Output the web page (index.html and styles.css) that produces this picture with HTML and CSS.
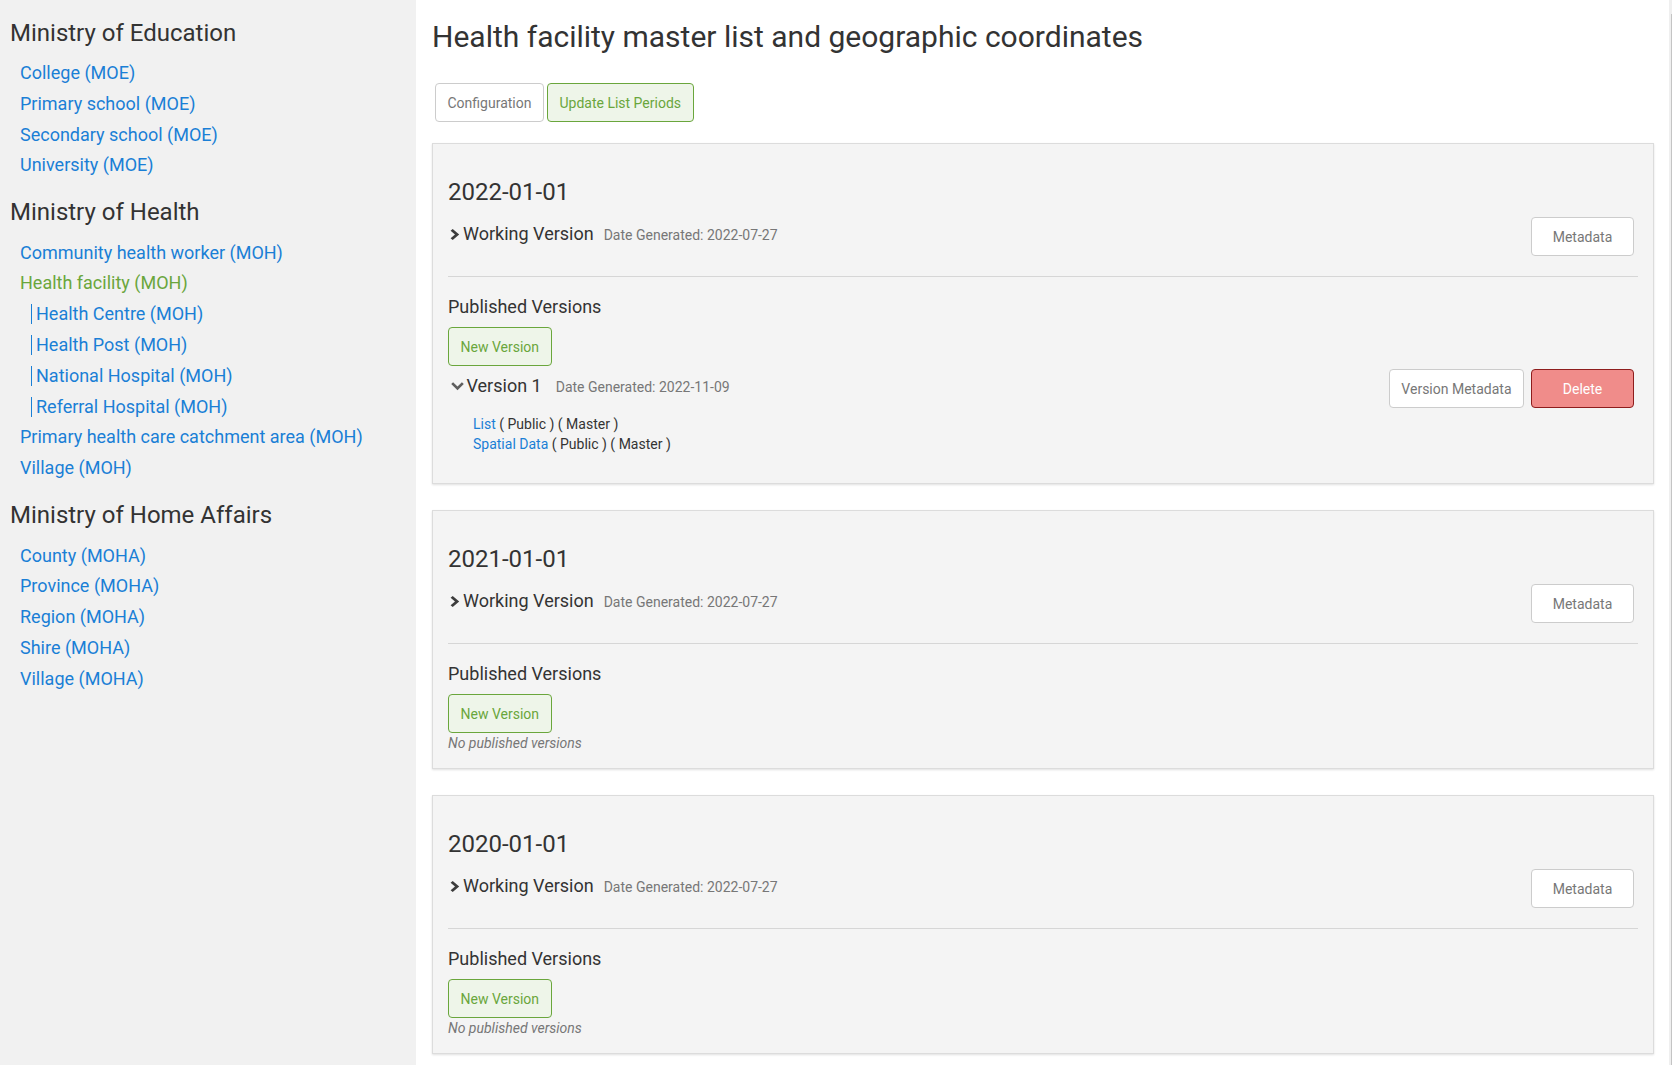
FILE: index.html
```html
<!DOCTYPE html>
<html lang="en">
<head>
<meta charset="utf-8">
<title>Health facility master list and geographic coordinates</title>
<link rel="stylesheet" href="styles.css">
</head>
<body>
<div class="layout">
  <aside class="sidebar">
    <section class="org">
      <h3 class="org-title">Ministry of Education</h3>
      <ul class="type-list">
        <li class="type-item"><a class="type-link" href="#">College (MOE)</a></li>
        <li class="type-item"><a class="type-link" href="#">Primary school (MOE)</a></li>
        <li class="type-item"><a class="type-link" href="#">Secondary school (MOE)</a></li>
        <li class="type-item"><a class="type-link" href="#">University (MOE)</a></li>
      </ul>
    </section>
    <section class="org">
      <h3 class="org-title">Ministry of Health</h3>
      <ul class="type-list">
        <li class="type-item"><a class="type-link" href="#">Community health worker (MOH)</a></li>
        <li class="type-item"><a class="type-link is-active" href="#">Health facility (MOH)</a></li>
        <li class="type-item sub-item"><a class="type-link sub-link" href="#">Health Centre (MOH)</a></li>
        <li class="type-item sub-item"><a class="type-link sub-link" href="#">Health Post (MOH)</a></li>
        <li class="type-item sub-item"><a class="type-link sub-link" href="#">National Hospital (MOH)</a></li>
        <li class="type-item sub-item"><a class="type-link sub-link" href="#">Referral Hospital (MOH)</a></li>
        <li class="type-item"><a class="type-link" href="#">Primary health care catchment area (MOH)</a></li>
        <li class="type-item"><a class="type-link" href="#">Village (MOH)</a></li>
      </ul>
    </section>
    <section class="org">
      <h3 class="org-title">Ministry of Home Affairs</h3>
      <ul class="type-list">
        <li class="type-item"><a class="type-link" href="#">County (MOHA)</a></li>
        <li class="type-item"><a class="type-link" href="#">Province (MOHA)</a></li>
        <li class="type-item"><a class="type-link" href="#">Region (MOHA)</a></li>
        <li class="type-item"><a class="type-link" href="#">Shire (MOHA)</a></li>
        <li class="type-item"><a class="type-link" href="#">Village (MOHA)</a></li>
      </ul>
    </section>
  </aside>

  <main class="main">
    <h1 class="page-title">Health facility master list and geographic coordinates</h1>
    <div class="toolbar">
      <button class="btn btn-default">Configuration</button>
      <button class="btn btn-success">Update List Periods</button>
    </div>

    <div class="period-card">
      <h2 class="period-date">2022-01-01</h2>
      <div class="version-row working-row">
        <div class="version-label"><svg class="chev-right" width="10" height="11" viewBox="0 0 10 11"><path d="M0.6 1.8 L2.7 0 L9.2 5.5 L2.7 11 L0.6 9.2 L5 5.5 Z" fill="#3c3c3c"/></svg><span class="version-name">Working Version</span><span class="version-date">Date Generated: 2022-07-27</span></div>
        <div class="version-actions">
          <button class="btn btn-default btn-wide">Metadata</button>
        </div>
      </div>
      <hr class="divider">
      <h4 class="published-title">Published Versions</h4>
      <button class="btn btn-success new-version">New Version</button>
      <div class="version-row published-row">
        <div class="version-label"><svg class="chev-down" width="13" height="9" viewBox="0 0 13 9"><path d="M0.2 2.1 L2.1 0.2 L6.5 4.4 L10.9 0.2 L12.8 2.1 L6.5 8.3 Z" fill="#5e5e5e"/></svg><span class="version-name">Version 1</span><span class="version-date version-date-wide">Date Generated: 2022-11-09</span></div>
        <div class="version-actions">
          <button class="btn btn-default">Version Metadata</button>
          <button class="btn btn-danger btn-wide">Delete</button>
        </div>
      </div>
      <ul class="file-list">
        <li class="file-item"><a class="file-link" href="#">List</a> ( Public ) ( Master )</li>
        <li class="file-item"><a class="file-link" href="#">Spatial Data</a> ( Public ) ( Master )</li>
      </ul>
    </div>

    <div class="period-card">
      <h2 class="period-date">2021-01-01</h2>
      <div class="version-row working-row">
        <div class="version-label"><svg class="chev-right" width="10" height="11" viewBox="0 0 10 11"><path d="M0.6 1.8 L2.7 0 L9.2 5.5 L2.7 11 L0.6 9.2 L5 5.5 Z" fill="#3c3c3c"/></svg><span class="version-name">Working Version</span><span class="version-date">Date Generated: 2022-07-27</span></div>
        <div class="version-actions">
          <button class="btn btn-default btn-wide">Metadata</button>
        </div>
      </div>
      <hr class="divider">
      <h4 class="published-title">Published Versions</h4>
      <button class="btn btn-success new-version">New Version</button>
      <p class="empty-note">No published versions</p>
    </div>

    <div class="period-card">
      <h2 class="period-date">2020-01-01</h2>
      <div class="version-row working-row">
        <div class="version-label"><svg class="chev-right" width="10" height="11" viewBox="0 0 10 11"><path d="M0.6 1.8 L2.7 0 L9.2 5.5 L2.7 11 L0.6 9.2 L5 5.5 Z" fill="#3c3c3c"/></svg><span class="version-name">Working Version</span><span class="version-date">Date Generated: 2022-07-27</span></div>
        <div class="version-actions">
          <button class="btn btn-default btn-wide">Metadata</button>
        </div>
      </div>
      <hr class="divider">
      <h4 class="published-title">Published Versions</h4>
      <button class="btn btn-success new-version">New Version</button>
      <p class="empty-note">No published versions</p>
    </div>
  </main>

  <div class="edge"><div class="edge-line"></div></div>
</div>
</body>
</html>
```

FILE: styles.css
```css
html, body {
  margin: 0;
  padding: 0;
  height: 100%;
  overflow: hidden;
}

body {
  font-family: Roboto, "Liberation Sans", sans-serif;
  color: #333;
  background: #fff;
}

.layout {
  display: flex;
  height: 100%;
}

/* ---------- Sidebar ---------- */
.sidebar {
  width: 416px;
  flex: 0 0 416px;
  background: #f1f1f1;
  padding: 18.5px 0 0 10px;
  box-sizing: border-box;
}

.org {
  margin-bottom: 17px;
}

.org-title {
  margin: 0 0 11.5px;
  font-size: 24px;
  line-height: 28px;
  font-weight: 400;
  color: #333;
}

.type-list {
  list-style: none;
  margin: 0;
  padding: 0 0 0 10px;
}

.type-item {
  line-height: 30.8px;
  height: 30.8px;
  font-size: 18px;
}

.type-link {
  color: #1a7fd6;
  text-decoration: none;
}

.type-link.is-active {
  color: #6aa63c;
}

.sub-item {
  padding-left: 11px;
}

.sub-link {
  display: inline-block;
  line-height: 20px;
  border-left: 1px solid #1a7fd6;
  padding-left: 4px;
}

/* ---------- Main ---------- */
.main {
  flex: 1 1 auto;
  min-width: 0;
  padding: 0 15px 0 16px;
}

.page-title {
  margin: 18.5px 0 28.5px;
  font-size: 30px;
  line-height: 36px;
  font-weight: 400;
  color: #333;
}

.toolbar {
  display: flex;
  gap: 3px;
  margin: 0 0 21px 3px;
}

.btn {
  font-family: Roboto, "Liberation Sans", sans-serif;
  font-size: 14px;
  line-height: 17px;
  padding: 10.5px 11.5px 9.5px;
  border: 1px solid #ccc;
  border-radius: 4px;
  background: #fff;
  color: #777;
  cursor: pointer;
  box-sizing: border-box;
  height: 39px;
}

.btn-success {
  background: #eef5e9;
  border-color: #6aa63c;
  color: #6aa63c;
}

.btn-danger {
  background: #f08c8a;
  border-color: #8e1d1d;
  color: #fff;
}

.btn-wide {
  min-width: 103px;
}

/* ---------- Period cards ---------- */
.period-card {
  background: #f4f4f4;
  border: 1px solid #dcdcdc;
  box-shadow: 0 1px 2px rgba(0, 0, 0, 0.12);
  padding: 15px;
  margin-bottom: 26px;
}

.period-date {
  margin: 17.5px 0 0;
  font-size: 24px;
  line-height: 30px;
  font-weight: 400;
  color: #333;
}

.version-row {
  display: flex;
  justify-content: space-between;
  align-items: flex-start;
}

.working-row {
  margin-top: 10.5px;
}

.published-row {
  margin-top: 3px;
}

.version-label {
  padding-top: 6px;
  line-height: 22px;
  white-space: nowrap;
}

.chev-right {
  margin: 0 3px 0 2px;
}

.chev-down {
  margin: 0 3px 1px 2.5px;
}

.version-name {
  font-size: 18px;
  color: #333;
}

.version-date {
  font-size: 14px;
  color: #777;
  margin-left: 10px;
}

.version-date-wide {
  margin-left: 14px;
}

.version-actions {
  display: flex;
  gap: 7px;
  margin-right: 4px;
}

.divider {
  margin: 20px 0 0;
  border: 0;
  border-top: 1px solid #d6d6d6;
  height: 0;
}

.published-title {
  margin: 20px 0 0;
  font-size: 18px;
  line-height: 20px;
  font-weight: 400;
  color: #333;
}

.new-version {
  display: block;
  margin-top: 10px;
}

.empty-note {
  margin: 0;
  font-size: 14px;
  line-height: 20px;
  font-style: italic;
  color: #777;
}

.file-list {
  list-style: none;
  margin: 6px 0 14px;
  padding: 0 0 0 25px;
}

.file-item {
  font-size: 14px;
  line-height: 20px;
  color: #333;
}

.file-link {
  color: #1a7fd6;
  text-decoration: none;
}

/* ---------- Right edge ---------- */
.edge {
  flex: 0 0 3px;
  width: 3px;
  background: #efefef;
  display: flex;
  justify-content: flex-end;
}

.edge-line {
  width: 1px;
  margin-top: 14px;
  background: #c4c4c4;
}
```
